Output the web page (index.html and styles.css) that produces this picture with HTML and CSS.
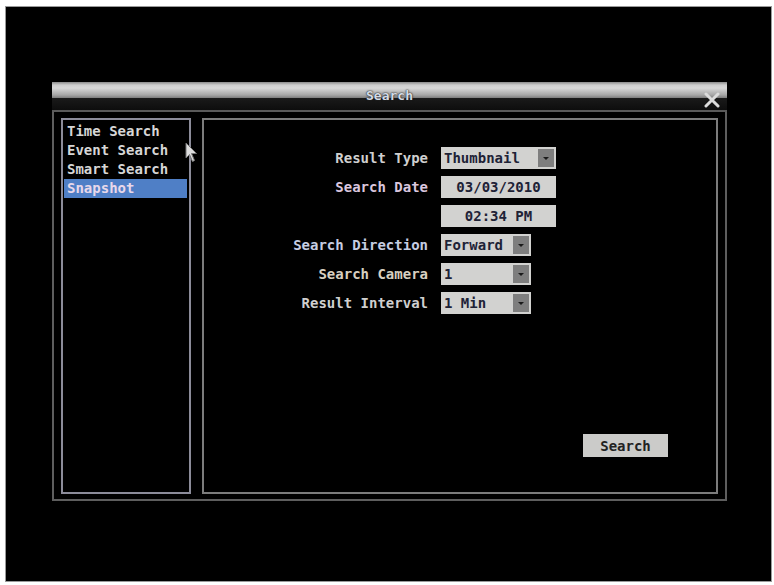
FILE: index.html
```html
<!DOCTYPE html>
<html lang="en">
<head>
    <meta charset="UTF-8">
    <title>Search</title>
    <link rel="stylesheet" href="styles.css">
</head>
<body>

    <div class="screen">
        <div class="dialog">
            <div class="dialog-title">
                <span>Search</span>
                <svg class="close-btn" width="16" height="16" viewBox="0 0 16 16">
                    <path d="M2 2 L14 14 M14 2 L2 14" stroke="#dcdcdc" stroke-width="3" stroke-linecap="round"/>
                </svg>
            </div>

            <div class="dialog-body">
                <ul class="menu">
                    <li>Time Search</li>
                    <li>Event Search</li>
                    <li>Smart Search</li>
                    <li class="active">Snapshot</li>
                </ul>

                <div class="panel">
                    <div class="form">
                        <label>Result Type</label>
                        <div class="field long"><span>Thumbnail</span><i class="drop"></i></div>

                        <label class="pink">Search Date</label>
                        <div class="field long center"><span>03/03/2010</span></div>

                        <label></label>
                        <div class="field long center"><span>02:34 PM</span></div>

                        <label class="blue">Search Direction</label>
                        <div class="field short"><span>Forward</span><i class="drop"></i></div>

                        <label class="warm">Search Camera</label>
                        <div class="field short"><span>1</span><i class="drop"></i></div>

                        <label>Result Interval</label>
                        <div class="field short"><span>1 Min</span><i class="drop"></i></div>
                    </div>

                    <button class="search-btn">Search</button>
                </div>
            </div>
        </div>

        <!-- указатель мыши -->
        <svg class="cursor" width="13" height="21" viewBox="0 0 13 21">
            <path d="M1 1 L1 16 L4.5 12.5 L7.5 19.5 L9.5 18.5 L6.5 11.5 L11.5 11.5 Z" fill="#dedede" stroke="#777" stroke-width="1"/>
        </svg>
    </div>

</body>
</html>
```

FILE: styles.css
```css
/* Общие стили */
body {
    margin: 0;
    padding: 0;
    background: #fff;
    font-family: 'DejaVu Sans Mono', 'Liberation Mono', monospace;
    font-weight: bold;
    font-size: 14px;
}

.screen {
    position: relative;
    box-sizing: border-box;
    width: 767px;
    height: 576px;
    margin: 6px 0 0 5px;
    padding: 75px 0 0 46px;
    background: #000;
    border: 1px solid #9a9a9a;
}

/* Окно поиска */
.dialog {
    width: 675px;
    height: 419px;
    display: flex;
    flex-direction: column;
}

.dialog-title {
    position: relative;
    height: 28px;
    line-height: 28px;
    font-size: 13px;
    text-align: center;
    color: #d4dbe6;
    text-shadow: 0 0 2px #222, 0 0 1px #222;
    background: linear-gradient(to bottom, #8a8a8a 0px, #cdcdcd 3px, #d8d8d8 6px, #a6a6a6 13px, #7c7c7c 16px, #1a1a1a 16px, #0d0d0d 28px);
    border-bottom: 2px solid #5a5a5a;
}

.close-btn {
    position: absolute;
    left: 652px;
    top: 10px;
}

.dialog-body {
    flex: 1;
    display: flex;
    gap: 11px;
    padding: 6px 7px 5px 7px;
    border: 2px solid #5e5e5e;
    border-top: none;
}

/* Меню слева */
.menu {
    width: 130px;
    box-sizing: border-box;
    margin: 0;
    padding: 2px 1px;
    list-style: none;
    border: 2px solid #8c8c9a;
}

.menu li {
    height: 19px;
    line-height: 19px;
    padding-left: 3px;
    margin-right: 1px;
    color: #d6d6d6;
    white-space: nowrap;
}

.menu li.active {
    background: #4f7fc6;
    color: #e8d8ea;
}

/* Правая панель */
.panel {
    flex: 1;
    display: flex;
    flex-direction: column;
    border: 2px solid #7c7c7c;
}

.form {
    display: grid;
    grid-template-columns: 224px auto;
    column-gap: 13px;
    row-gap: 7px;
    padding-top: 27px;
    justify-items: start;
}

.form label {
    justify-self: end;
    line-height: 22px;
    color: #cfcfcf;
    white-space: nowrap;
}

.form label.pink {
    color: #dac6de;
}

.form label.blue {
    color: #c6cde2;
}

.form label.warm {
    color: #d8d0c0;
}

.field {
    display: flex;
    box-sizing: border-box;
    height: 22px;
    line-height: 22px;
    padding-left: 3px;
    background: #d2d2d0;
    color: #1e2236;
    white-space: nowrap;
}

.field.long {
    width: 115px;
}

.field.short {
    width: 90px;
}

.field.center {
    justify-content: center;
    padding-left: 0;
}

.drop {
    position: relative;
    width: 16px;
    height: 18px;
    margin: 2px 2px 2px auto;
    background: #7e7e7e;
}

.drop::after {
    content: '';
    position: absolute;
    left: 5px;
    top: 8px;
    border-left: 3px solid transparent;
    border-right: 3px solid transparent;
    border-top: 3px solid #1a1a1a;
}

.search-btn {
    width: 85px;
    height: 23px;
    margin: auto 48px 35px auto;
    padding: 0;
    border: none;
    background: #cbcbc9;
    color: #222;
    font-family: inherit;
    font-weight: bold;
    font-size: 14px;
}

.cursor {
    position: absolute;
    left: 179px;
    top: 135px;
}
```
